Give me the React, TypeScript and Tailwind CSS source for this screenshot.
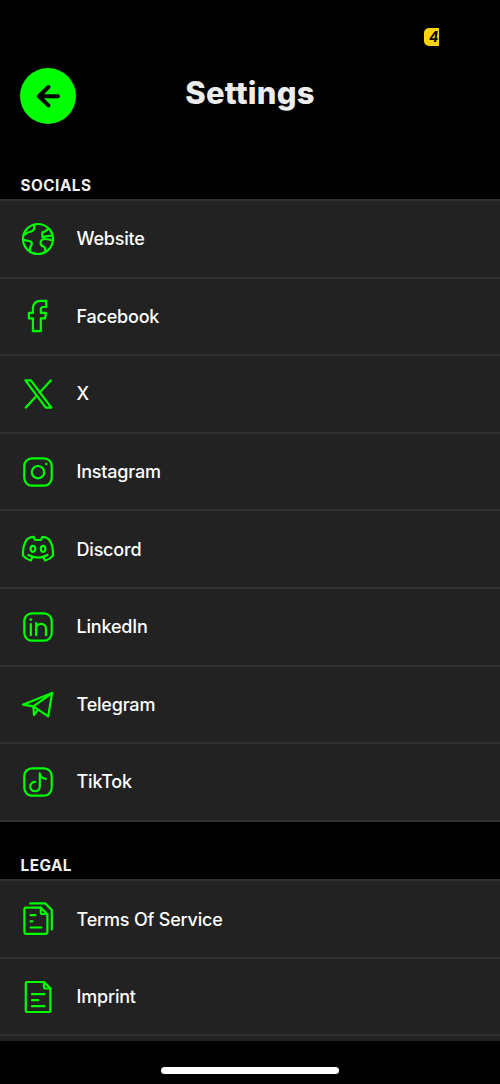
import type { ReactNode } from 'react'

type Item = { label: string; icon: ReactNode }

function Icon({ children }: { children: ReactNode }) {
  return (
    <svg
      viewBox="0 0 36 36"
      className="size-9 shrink-0"
      fill="none"
      stroke="#00ff00"
      strokeWidth="2.2"
      strokeLinecap="round"
      strokeLinejoin="round"
      aria-hidden="true"
    >
      {children}
    </svg>
  )
}

// Rounded square shared by the Instagram, LinkedIn and TikTok icons.
function Frame() {
  return <rect x="4.3" y="4.3" width="27.4" height="27.4" rx="7.6" />
}

const SOCIALS: Item[] = [
  {
    label: 'Website',
    icon: (
      <Icon>
        <circle cx="18" cy="18" r="15" />
        <path d="M13.2 4C14.6 5.2 14.9 6.8 14 8.2C13 10 11.6 10.8 9.5 11C7.4 11.2 6.6 12.6 4 13.6" />
        <path d="M3 18.6C5 19.6 7.4 19.8 9.4 20C11.4 20.4 12 21.6 11.8 23.2C11.6 25 10 25.2 10 27.4V30.4" />
        <path d="M28.6 7.6C26.6 9.2 25.4 10.8 22.4 11.4V16C25.4 16 27.4 14.6 32.6 14.6" />
        <path d="M33 19C30 19.4 28.4 18 25.4 18C22.4 18 20.6 19.4 20.6 21.6C20.6 24.4 21.2 25.2 23.2 25.4C25.2 25.8 25.6 27.4 25.2 30.6" />
      </Icon>
    ),
  },
  {
    label: 'Facebook',
    icon: (
      <Icon>
        <path d="M26.2 2.9V9H23.4C21.6 9 20.8 10 20.8 11.6V14.9H26L25 20.4H20.8V33.2H12.9V20.4H8.9V14.9H12.9V10.8C12.9 5.6 15.8 2.9 20.6 2.9Z" />
      </Icon>
    ),
  },
  {
    label: 'X',
    icon: (
      <Icon>
        <path d="M5.4 4.4H10.9L31.3 31.6H25.8Z" />
        <path d="M30.8 4.4L19.6 16.5M5.8 31.6L16.8 19.6" />
      </Icon>
    ),
  },
  {
    label: 'Instagram',
    icon: (
      <Icon>
        <Frame />
        <circle cx="18" cy="18.2" r="6.2" />
        <circle cx="26.3" cy="10" r="1.2" fill="#00ff00" stroke="none" />
      </Icon>
    ),
  },
  {
    label: 'Discord',
    icon: (
      <Icon>
        <path d="M13.6 5.9L15.2 9C17 8.8 19 8.8 20.8 9L22.4 5.9C25 6 27 6.8 29 8.3C32 12.2 33.3 17 33 24.6C31 27 28.4 28.6 25.2 29.5L23.6 26.5" />
        <path d="M13.6 5.9C11 6 9 6.8 7 8.3C4 12.2 2.7 17 3 24.6C5 27 7.6 28.6 10.8 29.5L12.4 26.5" />
        <path d="M8.4 24C14 27.4 22 27.4 27.6 24" />
        <ellipse cx="12.9" cy="17.8" rx="2.3" ry="3" />
        <ellipse cx="23.1" cy="17.8" rx="2.3" ry="3" />
      </Icon>
    ),
  },
  {
    label: 'LinkedIn',
    icon: (
      <Icon>
        <Frame />
        <path d="M10.8 15.2V26.2M16.2 14.2V26.2M16.2 19.4C16.2 16.6 18.4 14.8 21 14.8C23.8 14.8 26 16.6 26 19.6V26.2" />
        <circle cx="10.8" cy="10.6" r="1.4" fill="#00ff00" stroke="none" />
      </Icon>
    ),
  },
  {
    label: 'Telegram',
    icon: (
      <Icon>
        <path d="M2.9 18.7L32.1 7L28.2 30.4L13.4 20.4Z" />
        <path d="M32.1 7L13.4 20.4L14 29L17.8 23.8" />
      </Icon>
    ),
  },
  {
    label: 'TikTok',
    icon: (
      <Icon>
        <Frame />
        <path d="M15.2 17.8C12.2 17.8 10.2 20 10.2 22.6C10.2 25.2 12.2 27.2 14.9 27.2C17.7 27.2 19.8 25.2 19.8 22.4V9.4C20.4 12.8 22.6 14.6 25.8 14.8" />
      </Icon>
    ),
  },
]

const LEGAL: Item[] = [
  {
    label: 'Terms Of Service',
    icon: (
      <Icon>
        <path d="M10.2 2.4H25.2L31.8 9V28.6" />
        <path d="M6.2 6.6H20.8L27.4 13.2V30.8C27.4 32 26.6 32.8 25.4 32.8H6.4C5.2 32.8 4.4 32 4.4 30.8V8.6C4.4 7.4 5.2 6.6 6.2 6.6Z" />
        <path d="M20.8 6.6V11.4C20.8 12.4 21.4 13 22.4 13H27.2" />
        <path d="M10.6 14.2H15.4M10.6 20.4H12.4M10.6 26.5H21.4" />
      </Icon>
    ),
  },
  {
    label: 'Imprint',
    icon: (
      <Icon>
        <path d="M7 3H24L30.4 9.4V31.6C30.4 32.4 29.8 33 29 33H7.2C6.4 33 5.8 32.4 5.8 31.6V4.2C5.8 3.4 6.4 3 7 3Z" />
        <path d="M24 3V8.2C24 9 24.6 9.5 25.2 9.5H30.4" />
        <path d="M12 15.2H24.6M12 21.2H18.4M12 27.2H24.6" />
      </Icon>
    ),
  },
]

function Section({ title, items }: { title: string; items: Item[] }) {
  return (
    <section>
      <h2 className="pl-[20.5px] text-[15.3px] leading-[18px] font-bold tracking-[0.5px] text-[#f0f0f0]">
        {title}
      </h2>
      <ul className="mt-1 border-t-2 border-[#303030] bg-[#222222]">
        {items.map((item) => (
          <li
            key={item.label}
            className="flex h-[77.6px] items-center gap-[20.5px] border-b-2 border-[#303030] pl-5"
          >
            {item.icon}
            <span className="text-[18px] font-[530] tracking-[-0.2px] text-white">
              {item.label}
            </span>
          </li>
        ))}
      </ul>
    </section>
  )
}

export default function App() {
  return (
    <div className="flex h-[1084px] w-[500px] flex-col overflow-hidden bg-black font-['Inter',sans-serif]">
      <div className="flex h-[68px] shrink-0 justify-end pt-7 pr-[61px]">
        <div className="h-[18px] w-[15px] overflow-hidden rounded-l-[5px] bg-[#fbd50a] pl-[5px] text-[14px] leading-[18px] font-bold text-black italic">
          4
        </div>
      </div>

      <header className="grid h-[109px] shrink-0 grid-cols-[56px_1fr_56px] items-start px-5">
        <button
          type="button"
          aria-label="Back"
          className="flex size-14 items-center justify-center rounded-full bg-[#00ff00]"
        >
          <svg
            viewBox="0 0 24 24"
            className="size-6"
            fill="none"
            stroke="#000000"
            strokeWidth="4"
            strokeLinecap="round"
            strokeLinejoin="round"
          >
            <path d="M12.4 3L3 12.2L12.4 21.4M4 12.2H22" />
          </svg>
        </button>
        <h1 className="pt-[7px] text-center text-[31px] leading-9 font-[850] tracking-[0.25px] text-[#ececec]">
          Settings
        </h1>
      </header>

      <main className="flex h-[864px] shrink-0 flex-col gap-[35.5px] overflow-hidden">
        <Section title="SOCIALS" items={SOCIALS} />
        <div className="bg-black">
          <Section title="LEGAL" items={LEGAL} />
          <div className="h-10 bg-[#222222]" />
        </div>
      </main>

      <footer className="flex justify-center pt-[26px]">
        <div className="h-[7px] w-[178px] rounded-full bg-white" />
      </footer>
    </div>
  )
}
